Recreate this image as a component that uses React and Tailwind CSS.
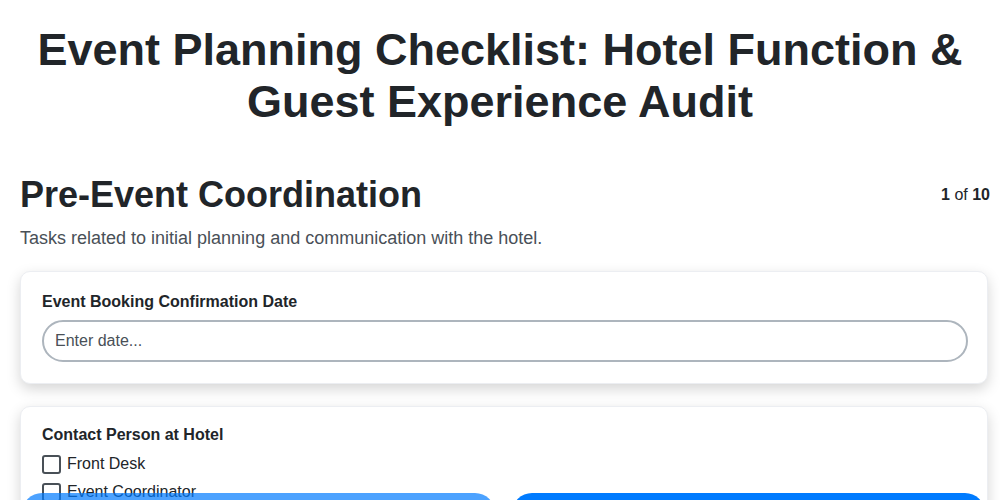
import React, { useState } from 'react';

const App = () => {
  const [date, setDate] = useState('');
  const [contacts, setContacts] = useState({});

  const options = ['Front Desk', 'Event Coordinator', 'Sales Manager', 'General Manager'];

  return (
    <div className="min-h-screen bg-white text-[#212529] font-['Liberation_Sans',Arial,sans-serif] pb-24">
      <h1 className="text-center text-[45px] font-bold leading-[52px] pt-[24px] px-8">
        Event Planning Checklist: Hotel Function &amp; Guest Experience Audit
      </h1>

      <div className="pl-5 pr-[10px] mt-[45px]">
        <div className="flex items-start justify-between">
          <h2 className="text-[36px] font-bold leading-[44px] text-[#212529]">Pre-Event Coordination</h2>
          <div className="text-[16px] pt-[10px]">
            <span className="font-bold">1</span> of <span className="font-bold">10</span>
          </div>
        </div>
        <p className="mt-[8px] text-[18px] leading-[27px] text-[#495057]">
          Tasks related to initial planning and communication with the hotel.
        </p>

        <div className="mt-[19px] flex flex-col gap-[22px] pr-[2px]">
          <div className="bg-white rounded-[10px] border border-[#eceef2] shadow-[0_5px_14px_rgba(0,0,0,0.17)] pl-[21px] pr-[19px] pt-[18px] pb-[21px]">
            <label className="block text-[16px] font-bold mb-[6px]">Event Booking Confirmation Date</label>
            <input
              type="text"
              value={date}
              onChange={(e) => setDate(e.target.value)}
              placeholder="Enter date..."
              className="w-full h-[42px] rounded-full border-2 border-[#adb5bd] px-[11px] text-[16px] text-[#212529] placeholder:text-[#495057] outline-none"
            />
          </div>

          <div className="bg-white rounded-[10px] border border-[#eceef2] shadow-[0_5px_14px_rgba(0,0,0,0.17)] pl-[21px] pr-[19px] pt-[16px] pb-[21px]">
            <div className="text-[16px] font-bold mb-[6px]">Contact Person at Hotel</div>
            <div className="flex flex-col gap-[6px]">
              {options.map((opt) => (
                <label key={opt} className="flex items-center gap-[6px] text-[16px] leading-[22px]">
                  <input
                    type="checkbox"
                    checked={!!contacts[opt]}
                    onChange={() => setContacts({ ...contacts, [opt]: !contacts[opt] })}
                    className="appearance-none w-[19px] h-[19px] border-2 border-[#495057] rounded-[3px] bg-white"
                  />
                  {opt}
                </label>
              ))}
            </div>
          </div>
        </div>
      </div>

      <div className="fixed left-0 right-0 bottom-0 flex gap-[17px] pl-[22px] pr-[15px] top-[493px]">
        <button disabled className="flex-1 h-[44px] rounded-[20px] bg-[#007bff] opacity-70 text-white text-[16px] font-bold">
          Previous
        </button>
        <button className="flex-1 h-[44px] rounded-[20px] bg-[#007bff] text-white text-[16px] font-bold">
          Next
        </button>
      </div>
    </div>
  );
};

export default App;
